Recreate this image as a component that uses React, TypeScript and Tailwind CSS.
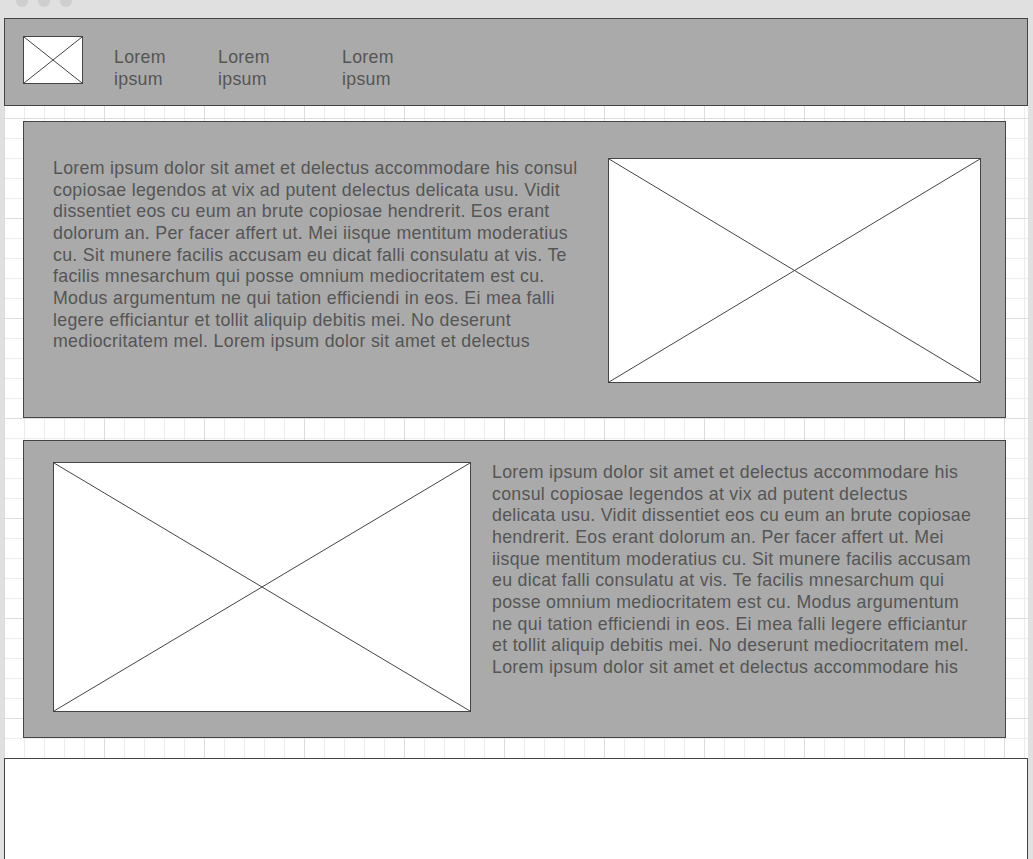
// Wireframe page mockup
const LOREM_A =
  "Lorem ipsum dolor sit amet et delectus accommodare his consul copiosae legendos at vix ad putent delectus delicata usu. Vidit dissentiet eos cu eum an brute copiosae hendrerit. Eos erant dolorum an. Per facer affert ut. Mei iisque mentitum moderatius cu. Sit munere facilis accusam eu dicat falli consulatu at vis. Te facilis mnesarchum qui posse omnium mediocritatem est cu. Modus argumentum ne qui tation efficiendi in eos. Ei mea falli legere efficiantur et tollit aliquip debitis mei. No deserunt mediocritatem mel. Lorem ipsum dolor sit amet et delectus";

const LOREM_B =
  "Lorem ipsum dolor sit amet et delectus accommodare his consul copiosae legendos at vix ad putent delectus delicata usu. Vidit dissentiet eos cu eum an brute copiosae hendrerit. Eos erant dolorum an. Per facer affert ut. Mei iisque mentitum moderatius cu. Sit munere facilis accusam eu dicat falli consulatu at vis. Te facilis mnesarchum qui posse omnium mediocritatem est cu. Modus argumentum ne qui tation efficiendi in eos. Ei mea falli legere efficiantur et tollit aliquip debitis mei. No deserunt mediocritatem mel. Lorem ipsum dolor sit amet et delectus accommodare his";

// Image placeholder: white box with a cross
function Placeholder({ className = "" }: { className?: string }) {
  return (
    <div className={`shrink-0 border border-[#444] bg-white ${className}`}>
      <svg
        width="100%"
        height="100%"
        viewBox="0 0 100 100"
        preserveAspectRatio="none"
        className="block"
      >
        <line x1="0" y1="0" x2="100" y2="100" stroke="#444" strokeWidth="1" vectorEffect="non-scaling-stroke" />
        <line x1="100" y1="0" x2="0" y2="100" stroke="#444" strokeWidth="1" vectorEffect="non-scaling-stroke" />
      </svg>
    </div>
  );
}

function NavItem({ className = "" }: { className?: string }) {
  return <div className={`w-[60px] ${className}`}>Lorem ipsum</div>;
}

export default function App() {
  return (
    <div className="min-h-[859px] bg-[#e0e0e0] font-['Liberation_Sans',Arial,sans-serif] text-[17.75px] leading-[21.66px] tracking-[0.3px] text-[#555555]">
      {/* Window top bar */}
      <div className="flex h-[18px] items-start gap-[10px] overflow-hidden pl-[16px]">
        <div className="-mt-[5px] h-[12px] w-[12px] rounded-full bg-[#cecece]" />
        <div className="-mt-[5px] h-[12px] w-[12px] rounded-full bg-[#cecece]" />
        <div className="-mt-[5px] h-[12px] w-[12px] rounded-full bg-[#cecece]" />
      </div>

      {/* Grid canvas */}
      <div className="ml-[4px] mr-[5px] h-[841px] overflow-hidden bg-white bg-[linear-gradient(to_right,#dcdcdc_1px,transparent_1px),linear-gradient(to_bottom,#dcdcdc_1px,transparent_1px),linear-gradient(to_right,#ececec_1px,transparent_1px),linear-gradient(to_bottom,#ececec_1px,transparent_1px)] bg-[size:100px_100px,100px_100px,20px_20px,20px_20px]">
        {/* Header */}
        <div className="flex h-[88px] items-start border border-[#444] bg-[#aaaaaa] pl-[18px] pt-[17px]">
          <Placeholder className="h-[48px] w-[60px]" />
          <div className="ml-[31px] mt-[11px] flex">
            <NavItem />
            <NavItem className="ml-[44px]" />
            <NavItem className="ml-[64px]" />
          </div>
        </div>

        <div className="pl-[19px] pr-[22px]">
          {/* Section 1: text + image */}
          <div className="mt-[15px] flex h-[297px] items-start justify-between border border-[#444] bg-[#aaaaaa] pl-[29px] pr-[24px] pt-[36px]">
            <p className="w-[535px]">{LOREM_A}</p>
            <Placeholder className="h-[225px] w-[373px]" />
          </div>

          {/* Section 2: image + text */}
          <div className="mt-[22px] flex h-[298px] items-start gap-[21px] border border-[#444] bg-[#aaaaaa] pl-[29px] pt-[21px]">
            <Placeholder className="h-[250px] w-[418px]" />
            <p className="w-[481px]">{LOREM_B}</p>
          </div>
        </div>

        {/* Footer */}
        <div className="mt-[20px] h-[140px] border border-[#444] bg-white" />
      </div>
    </div>
  );
}
